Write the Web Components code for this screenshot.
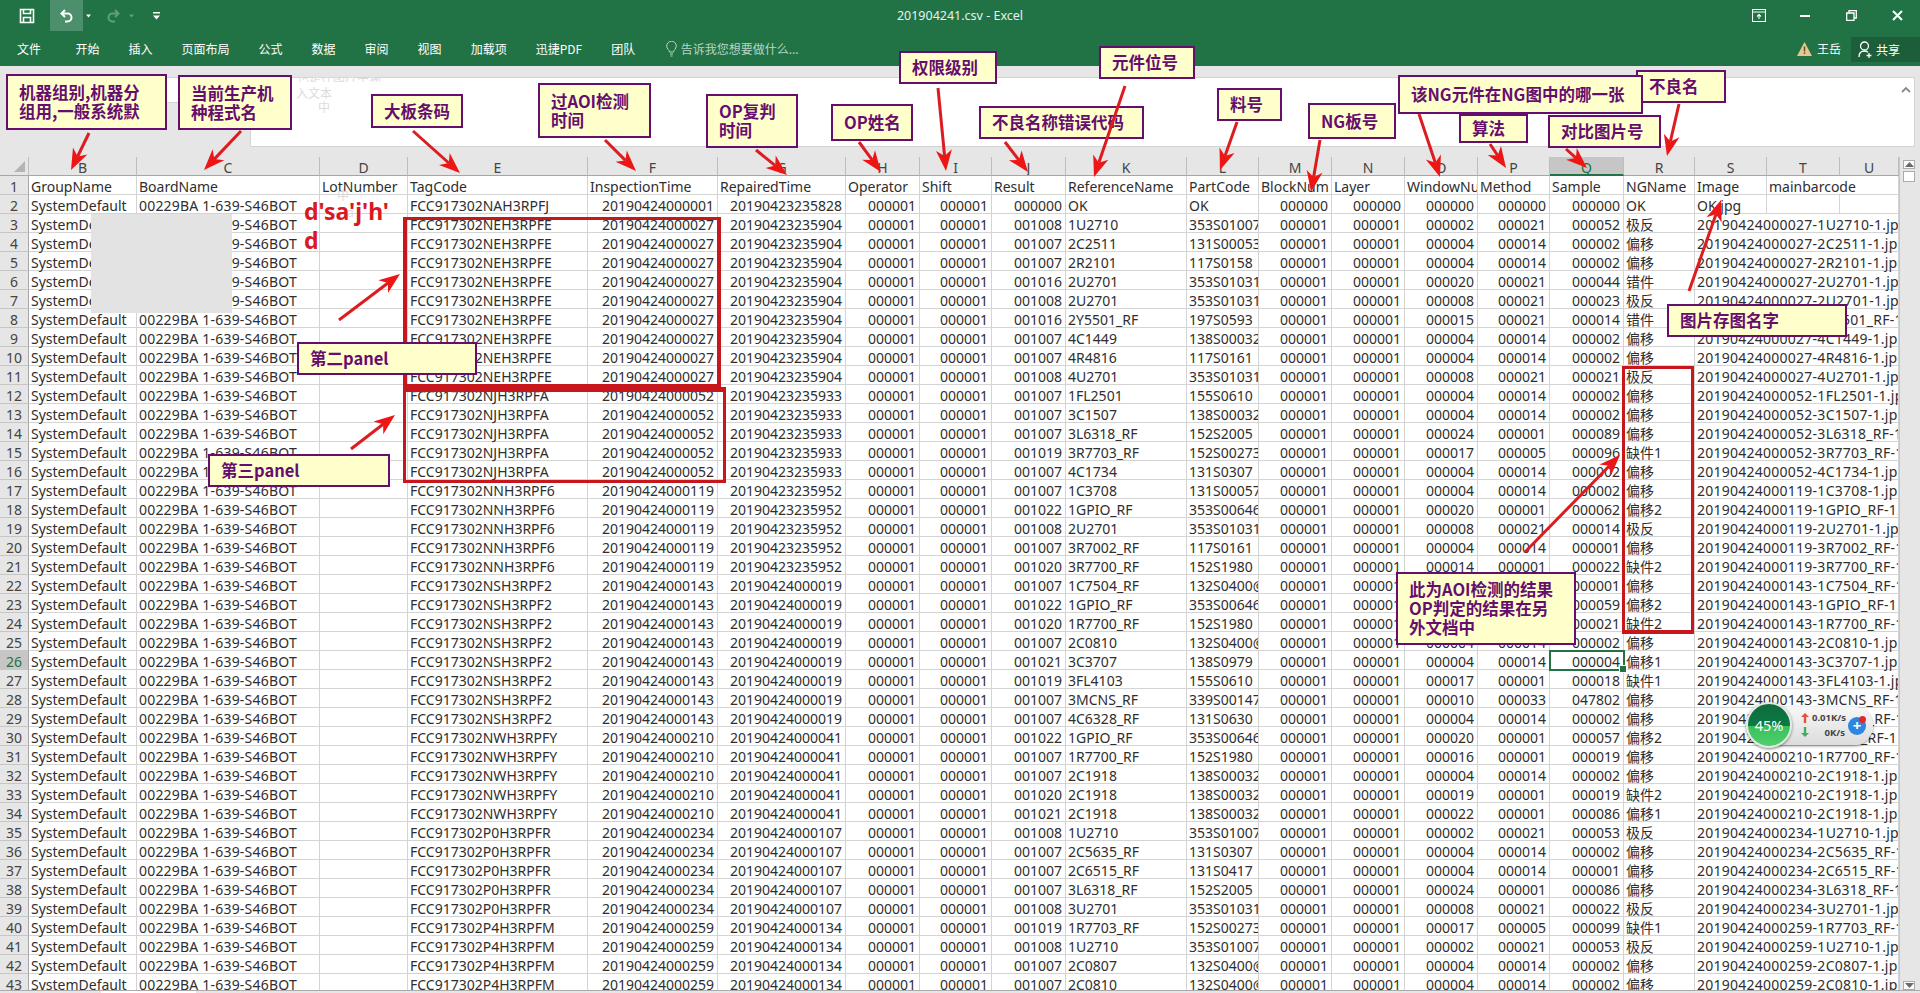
<!DOCTYPE html>
<html lang="zh-CN">
<head>
<meta charset="utf-8">
<title>201904241.csv - Excel</title>
<style>
  html, body { margin: 0; height: 100%; overflow: hidden; background: #e6e6e6; }
  body { display: flex; flex-direction: column; font-family: "Noto Sans", "Noto Sans CJK SC", sans-serif; }
</style>
</head>
<body>
<excel-titlebar></excel-titlebar>
<excel-tabs></excel-tabs>
<formula-bar></formula-bar>
<sheet-view></sheet-view>
<sheet-tabs></sheet-tabs>

<mark-box x="403" y="217" w="318" h="172" t="3" b="5" r="4" l="4"></mark-box>
<mark-box x="403" y="387" w="323" h="96" t="5" b="3" r="3" l="3"></mark-box>
<mark-box x="1622" y="366" w="72" h="268" t="3" b="4" r="3" l="3"></mark-box>
<ghost-text x="297" y="77" clip="5" text="也是在图片中输"></ghost-text>
<ghost-text x="296" y="86" text="入文本"></ghost-text>
<ghost-text x="318" y="100" text="中"></ghost-text>
<ghost-text x="337" y="188" text="中"></ghost-text>
<ghost-text x="347" y="205" text="a"></ghost-text>
<blur-patch></blur-patch>
<hand-note>d'sa'j'h'<br>d</hand-note>

<call-out x="6" y="74" w="161" h="56">机器组别,机器分<br>组用,一般系统默</call-out>
<call-out x="178" y="75" w="114" h="55">当前生产机<br>种程式名</call-out>
<call-out x="371" y="94" w="92" h="34">大板条码</call-out>
<call-out x="538" y="83" w="113" h="55">过AOI检测<br>时间</call-out>
<call-out x="706" y="94" w="92" h="54">OP复判<br>时间</call-out>
<call-out x="831" y="104" w="82" h="37">OP姓名</call-out>
<call-out x="899" y="51" w="98" h="33">权限级别</call-out>
<call-out x="979" y="106" w="165" h="33">不良名称错误代码</call-out>
<call-out x="1099" y="46" w="96" h="33">元件位号</call-out>
<call-out x="1217" y="88" w="65" h="33">料号</call-out>
<call-out x="1308" y="103" w="88" h="36">NG板号</call-out>
<call-out x="1636" y="70" w="90" h="33">不良名</call-out>
<call-out x="1459" y="114" w="69" h="29">算法</call-out>
<call-out x="1548" y="115" w="113" h="33">对比图片号</call-out>
<call-out x="1398" y="75" w="245" h="39">该NG元件在NG图中的哪一张</call-out>
<call-out x="297" y="342" w="180" h="33">第二panel</call-out>
<call-out x="208" y="454" w="182" h="33">第三panel</call-out>
<call-out x="1667" y="304" w="180" h="33">图片存图名字</call-out>
<call-out x="1396" y="572" w="180" h="73">此为AOI检测的结果<br>OP判定的结果在另<br>外文档中</call-out>

<arrow-layer></arrow-layer>
<net-widget></net-widget>

<script>
class ExcelTitlebar extends HTMLElement {
  constructor() {
    super();
    this.attachShadow({ mode: 'open' });
    this.shadowRoot.innerHTML = `
      <style>
        :host { display: grid; grid-template-columns: 1fr auto 1fr; height: 31px; background: #217346; color: #fff; font: 12.5px "Noto Sans", sans-serif; }
        .qat { display: flex; align-items: center; padding-left: 19px; }
        .undo { display: flex; align-items: center; justify-content: center; width: 33px; height: 31px; background: #4b8f6d; margin-left: 15px; }
        .title { align-self: center; color: #e8f1ec; }
        .win { display: flex; justify-content: flex-end; }
        .win span { display: flex; align-items: center; justify-content: center; width: 46px; }
        .caret { margin-left: 2px; }
        svg { display: block; }
      </style>
      <div class="qat">
        <svg width="16" height="16" viewBox="0 0 16 16" fill="none" stroke="#fff" stroke-width="1.6"><path d="M1.5 1.5h13v13h-13z"/><path d="M4.5 1.5v4h7v-4M4.5 14.5v-5h7v5"/></svg>
        <span class="undo"><svg width="16" height="16" viewBox="0 0 16 16" fill="none" stroke="#fff" stroke-width="2"><path d="M6 2L2.5 5.5 6 9"/><path d="M3 5.5h5.5a4 4 0 0 1 0 8H6"/></svg></span>
        <svg class="caret" width="7" height="6" viewBox="0 0 7 6"><path d="M1 1.5h5L3.5 4.5z" fill="#fff"/></svg>
        <svg style="margin-left:13px" width="16" height="16" viewBox="0 0 16 16" fill="none" stroke="#5f9f7f" stroke-width="2"><path d="M10 2l3.5 3.5L10 9"/><path d="M13 5.500H7.500a4 4 0 0 0 0 8H10"/></svg>
        <svg style="margin-left:7px" width="7" height="6" viewBox="0 0 7 6"><path d="M1 1.500h5L3.500 4.500z" fill="#5f9f7f"/></svg>
        <svg style="margin-left:17px" width="9" height="10" viewBox="0 0 9 10" fill="#fff"><path d="M1 1h7v1.400H1zM1 4.500h7L4.500 8.500z"/></svg>
      </div>
      <div class="title">201904241.csv - Excel</div>
      <div class="win">
        <span><svg width="14" height="13" viewBox="0 0 14 13" fill="none" stroke="#fff" stroke-width="1.100"><path d="M.5.500h13v12H.500zM.5 3h13"/><path d="M7 10V5.500M5 7.500l2-2 2 2"/></svg></span>
        <span><svg width="10" height="4" viewBox="0 0 10 4"><path d="M0 1h10v2H0z" fill="#fff"/></svg></span>
        <span><svg width="11" height="11" viewBox="0 0 11 11" fill="none" stroke="#fff" stroke-width="1.300"><path d="M.7 3h7.300v7.300H.700zM3 3V.7h7.300V8H8"/></svg></span>
        <span><svg width="11" height="11" viewBox="0 0 11 11" stroke="#fff" stroke-width="2"><path d="M1 1l9 9M10 1l-9 9"/></svg></span>
      </div>`;
  }
}

class ExcelTabs extends HTMLElement {
  constructor() {
    super();
    this.attachShadow({ mode: 'open' });
    const tabs = ['开始', '插入', '页面布局', '公式', '数据', '审阅', '视图', '加载项', '迅捷PDF', '团队'];
    this.shadowRoot.innerHTML = `
      <style>
        :host { display: flex; align-items: center; height: 35px; background: #217346; color: #fff; font: 12px "Noto Sans CJK SC", sans-serif; }
        .tab { padding: 0 14.500px; white-space: nowrap; }
        .file { padding: 0 20px 0 17px; }
        .tell { display: flex; align-items: center; gap: 4px; margin-left: 16px; color: #b8d5c5; }
        .user { display: flex; align-items: center; gap: 5px; margin-left: auto; margin-right: 10px; }
        .share { display: flex; align-items: center; gap: 3px; width: 69px; height: 25px; padding-left: 7px; box-sizing: border-box; background: #1c5d3a; margin-top: 2px; }
      </style>
      <span class="tab file">文件</span>
      ${tabs.map(t => `<span class="tab">${t}</span>`).join('')}
      <span class="tell">
        <svg width="11" height="16" viewBox="0 0 11 16" fill="none" stroke="#b8d5c5"><path d="M3.500 11c0-2-2.800-3-2.800-6a4.800 4.800 0 0 1 9.600 0c0 3-2.800 4-2.800 6z"/><path d="M4 13h3M4.500 15h2"/></svg>
        告诉我您想要做什么...
      </span>
      <span class="user">
        <svg width="15" height="14" viewBox="0 0 15 14"><path d="M7.500 0L15 14H0z" fill="#e7c690"/><path d="M6.800 4.500h1.400v5H6.800zM6.800 10.500h1.400V12H6.800z" fill="#5b4a2a"/></svg>
        王岳
      </span>
      <span class="share">
        <svg width="15" height="18" viewBox="0 0 15 18" fill="none" stroke="#fff" stroke-width="1.300"><circle cx="6.500" cy="5" r="4"/><path d="M1 16c0-4 2-6 5.500-6 1.500 0 2.500.5 3.500 1.200"/><path d="M11 12v5M8.500 14.500h5"/></svg>
        共享
      </span>`;
  }
}

class FormulaBar extends HTMLElement {
  constructor() {
    super();
    this.attachShadow({ mode: 'open' });
    this.shadowRoot.innerHTML = `
      <style>
        :host { display: flex; align-items: flex-start; height: 91px; box-sizing: border-box; padding: 11px 5px 10px 6px; background: #e6e6e6; }
        .name { width: 244px; height: 26px; box-sizing: border-box; background: #fff; border: 1px solid #d4d4d4; border-right: 0; }
        .input { position: relative; flex: 1; height: 70px; box-sizing: border-box; background: #fff; border: 1px solid #d4d4d4; }
        svg { position: absolute; right: 3px; top: 8px; }
      </style>
      <div class="name"></div>
      <div class="input"><svg width="10" height="7" viewBox="0 0 10 7" fill="none" stroke="#8a8a8a" stroke-width="1.800"><path d="M1 6l4-4 4 4"/></svg></div>`;
  }
}

const COLS = [108, 183, 88, 180, 130, 128, 74, 72, 74, 121, 72, 73, 73, 73, 72, 74, 71, 72, 73, 59];
const LETTERS = 'BCDEFGHIJKLMNOPQRSTU'.split('');
const HEAD = ['GroupName', 'BoardName', 'LotNumber', 'TagCode', 'InspectionTime', 'RepairedTime', 'Operator', 'Shift', 'Result', 'ReferenceName', 'PartCode', 'BlockNum', 'Layer', 'WindowNumber', 'Method', 'Sample', 'NGName', 'Image'];

// tag, inspection, repaired, rows: result ref part window method sample ngname
const PANELS = [
  ['NEH3RPFE', '000027', '20190423235904', [
    '001008 1U2710 353S01007 000002 000021 000052 极反',
    '001007 2C2511 131S00053 000004 000014 000002 偏移',
    '001007 2R2101 117S0158 000004 000014 000002 偏移',
    '001016 2U2701 353S01031 000020 000021 000044 错件',
    '001008 2U2701 353S01031 000008 000021 000023 极反',
    '001016 2Y5501_RF 197S0593 000015 000021 000014 错件',
    '001007 4C1449 138S00032 000004 000014 000002 偏移',
    '001007 4R4816 117S0161 000004 000014 000002 偏移',
    '001008 4U2701 353S01031 000008 000021 000021 极反']],
  ['NJH3RPFA', '000052', '20190423235933', [
    '001007 1FL2501 155S0610 000004 000014 000002 偏移',
    '001007 3C1507 138S00032 000004 000014 000002 偏移',
    '001007 3L6318_RF 152S2005 000024 000001 000089 偏移',
    '001019 3R7703_RF 152S00273 000017 000005 000096 缺件1',
    '001007 4C1734 131S0307 000004 000014 000002 偏移']],
  ['NNH3RPF6', '000119', '20190423235952', [
    '001007 1C3708 131S00057 000004 000014 000002 偏移',
    '001022 1GPIO_RF 353S00646 000020 000001 000062 偏移2',
    '001008 2U2701 353S01031 000008 000021 000014 极反',
    '001007 3R7002_RF 117S0161 000004 000014 000001 偏移',
    '001020 3R7700_RF 152S1980 000014 000001 000022 缺件2']],
  ['NSH3RPF2', '000143', '20190424000019', [
    '001007 1C7504_RF 132S0400@ 000004 000014 000001 偏移',
    '001022 1GPIO_RF 353S00646 000020 000001 000059 偏移2',
    '001020 1R7700_RF 152S1980 000016 000001 000021 缺件2',
    '001007 2C0810 132S0400@ 000004 000014 000002 偏移',
    '001021 3C3707 138S0979 000004 000014 000004 偏移1',
    '001019 3FL4103 155S0610 000017 000001 000018 缺件1',
    '001007 3MCNS_RF 339S00147 000010 000033 047802 偏移',
    '001007 4C6328_RF 131S0630 000004 000014 000002 偏移']],
  ['NWH3RPFY', '000210', '20190424000041', [
    '001022 1GPIO_RF 353S00646 000020 000001 000057 偏移2',
    '001007 1R7700_RF 152S1980 000016 000001 000019 偏移',
    '001007 2C1918 138S00032 000004 000014 000002 偏移',
    '001020 2C1918 138S00032 000019 000001 000019 缺件2',
    '001021 2C1918 138S00032 000022 000001 000086 偏移1']],
  ['P0H3RPFR', '000234', '20190424000107', [
    '001008 1U2710 353S01007 000002 000021 000053 极反',
    '001007 2C5635_RF 131S0307 000004 000014 000002 偏移',
    '001007 2C6515_RF 131S0417 000004 000014 000001 偏移',
    '001007 3L6318_RF 152S2005 000024 000001 000086 偏移',
    '001008 3U2701 353S01031 000008 000021 000022 极反']],
  ['P4H3RPFM', '000259', '20190424000134', [
    '001019 1R7703_RF 152S00273 000017 000005 000099 缺件1',
    '001008 1U2710 353S01007 000002 000021 000053 极反',
    '001007 2C0807 132S0400@ 000004 000014 000002 偏移',
    '001007 2C0810 132S0400@ 000004 000014 000002 偏移']],
];

class SheetView extends HTMLElement {
  constructor() {
    super();
    this.attachShadow({ mode: 'open' });
    this.shadowRoot.innerHTML = `
      <style>
        :host { display: flex; flex: 1; min-height: 0; overflow: hidden; background: #fff; font: 14px "Noto Sans", "Noto Sans CJK SC", sans-serif; color: #2e2e2e; }
        .grid { display: grid; grid-template-columns: 29px ${COLS.map(c => c + 'px').join(' ')}; grid-auto-rows: 19px; }
        .grid > div { box-sizing: border-box; border-right: 1px solid #d4d4d4; border-bottom: 1px solid #d4d4d4; line-height: 22px; padding: 0 2px 0 2px; white-space: nowrap; overflow-x: clip; overflow-y: visible; }
        .grid > .num { text-align: right; padding-right: 3px; }
        .grid > .ch { background: #e6e6e6; text-align: center; color: #444; border-right-color: #bdbdbd; border-bottom-color: #a6a6a6; padding: 0; overflow: hidden; }
        .grid > .rh { background: #e6e6e6; text-align: center; color: #444; border-right-color: #a6a6a6; border-bottom-color: #c6c6c6; padding: 0; overflow: hidden; }
        .grid > .corner { background: #e6e6e6; border-bottom-color: #a6a6a6; border-right-color: #bdbdbd; position: relative; }
        .corner::after { content: ''; position: absolute; right: 3px; bottom: 3px; width: 11px; height: 11px; background: #b4b4b4; clip-path: polygon(100% 0, 100% 100%, 0 100%); }
        .grid > .sel { background: #c6c6c6; color: #217346; }
        .grid > .ch.sel { border-bottom: 2px solid #217346; }
        .grid > .active { position: relative; overflow: visible; outline: 2px solid #217346; outline-offset: -1px; z-index: 1; }
        .active::after { content: ''; position: absolute; right: -4px; bottom: -4px; width: 6px; height: 6px; background: #217346; border: 1px solid #fff; }
        .grid > .s { grid-column: span 3; letter-spacing: .25px; }
        .grid > .board { letter-spacing: .2px; }
        .grid > .wide { grid-column: span 2; }
        .bar { display: flex; flex-direction: column; width: 21px; box-sizing: border-box; padding: 3px 5px 0 3px; background: #e6e6e6; border-left: 1px solid #c6c6c6; }
        .btn { height: 15px; background: #fafafa; border: 1px solid #ababab; box-sizing: border-box; display: flex; align-items: center; justify-content: center; }
        .thumb { height: 16px; margin-top: 2px; background: #fff; border: 1px solid #ababab; box-sizing: border-box; }
        .down { margin-top: 799px; }
      </style>
      <div class="grid">${this.buildCells()}</div>
      <div class="bar">
        <div class="btn"><svg width="9" height="5" viewBox="0 0 9 5"><path d="M4.500 0L9 5H0z" fill="#6a6a6a"/></svg></div>
        <div class="thumb"></div>
        <div class="btn down"><svg width="9" height="5" viewBox="0 0 9 5"><path d="M0 0h9L4.500 5z" fill="#6a6a6a"/></svg></div>
      </div>`;
  }

  buildCells() {
    let html = '<div class="corner"></div>';
    LETTERS.forEach(l => { html += `<div class="ch${l === 'Q' ? ' sel' : ''}">${l}</div>`; });
    html += '<div class="rh">1</div>' + HEAD.map(h => `<div>${h}</div>`).join('') + '<div class="wide">mainbarcode</div>';

    const left = (t) => `<div>${t}</div>`;
    const right = (t) => `<div class="num">${t}</div>`;
    const common = (n, tag, insp, rep) =>
      `<div class="rh${n === 26 ? ' sel' : ''}">${n}</div>` + left('SystemDefault') + '<div class="board">00229BA 1-639-S46BOT</div>' + left('') +
      left('FCC917302' + tag) + right('20190424' + insp) + right(rep) + right('000001') + right('000001');

    html += common(2, 'NAH3RPFJ', '000001', '20190423235828') + right('000000') + left('OK') + left('OK') +
      right('000000') + right('000000') + right('000000') + right('000000') + right('000000') + left('OK') + left('OK.jpg') + left('') + left('');

    let n = 3;
    PANELS.forEach(([tag, insp, rep, rows]) => {
      rows.forEach(row => {
        const [result, ref, part, win, method, sample, ng] = row.split(' ');
        html += common(n, tag, insp, rep) + right(result) + left(ref) + left(part) +
          right('000001') + right('000001') + right(win) + right(method) +
          `<div class="num${n === 26 ? ' active' : ''}">${sample}</div>` + left(ng) +
          `<div class="s">20190424${insp}-${ref}-1.jpg</div>`;
        n++;
      });
    });
    return html;
  }
}

class SheetTabs extends HTMLElement {
  constructor() {
    super();
    this.attachShadow({ mode: 'open' });
    this.shadowRoot.innerHTML = `
      <style>
        :host { display: block; height: 3px; background: #e6e6e6; border-top: 1px solid #ababab; box-sizing: border-box; padding-left: 101px; }
        div { width: 95px; height: 2px; background: #fff; }
      </style>
      <div></div>`;
  }
}

class OverlayBox extends HTMLElement {
  place() {
    const a = (k) => this.getAttribute(k);
    this.style.left = a('x') + 'px';
    this.style.top = a('y') + 'px';
    if (a('w')) this.style.width = a('w') + 'px';
    if (a('h')) this.style.height = a('h') + 'px';
  }
  connectedCallback() { this.place(); }
}

class CallOut extends OverlayBox {
  constructor() {
    super();
    this.attachShadow({ mode: 'open' });
    this.shadowRoot.innerHTML = `
      <style>
        :host { position: absolute; display: flex; align-items: center; box-sizing: border-box; padding-left: 11px; background: #ffffcc; border: 2.500px solid #660e6e; color: #660e6e; font: 700 16.500px/19px "Noto Sans CJK SC", sans-serif; white-space: nowrap; }
      </style>
      <div><slot></slot></div>`;
  }
}

class MarkBox extends OverlayBox {
  constructor() {
    super();
    this.attachShadow({ mode: 'open' });
    this.shadowRoot.innerHTML = `<style>:host { position: absolute; box-sizing: border-box; border: 0 solid #c8161d; }</style>`;
  }
  connectedCallback() {
    this.place();
    ['top', 'bottom', 'left', 'right'].forEach(side => {
      this.style['border' + side[0].toUpperCase() + side.slice(1) + 'Width'] = this.getAttribute(side[0]) + 'px';
    });
  }
}

class GhostText extends OverlayBox {
  constructor() {
    super();
    this.attachShadow({ mode: 'open' });
  }
  connectedCallback() {
    this.place();
    const clip = this.getAttribute('clip');
    this.shadowRoot.innerHTML = `
      <style>
        :host { position: absolute; font: 12px/14px "Noto Sans CJK SC", sans-serif; color: #dcdcdc; white-space: nowrap; ${clip ? `height: ${clip}px; overflow: hidden;` : ''} }
      </style>
      <div style="${clip ? 'margin-top:-7px' : ''}">${this.getAttribute('text')}</div>`;
  }
}

class BlurPatch extends HTMLElement {
  constructor() {
    super();
    this.attachShadow({ mode: 'open' });
    this.shadowRoot.innerHTML = `<style>:host { position: absolute; left: 91px; top: 214px; width: 141px; height: 99px; background: #e3e3e3; }</style>`;
  }
}

class HandNote extends HTMLElement {
  constructor() {
    super();
    this.attachShadow({ mode: 'open' });
    this.shadowRoot.innerHTML = `
      <style>:host { position: absolute; left: 304px; top: 197px; font: 700 23px/29px "Noto Sans", sans-serif; color: #d9191f; white-space: nowrap; }</style>
      <slot></slot>`;
  }
}

class ArrowLayer extends HTMLElement {
  constructor() {
    super();
    this.attachShadow({ mode: 'open' });
    const arrows = [
      [89, 133, 71, 170], [241, 131, 204, 170], [413, 131, 460, 173], [605, 140, 636, 171],
      [756, 150, 787, 175], [859, 142, 881, 172], [938, 88, 946, 171], [1005, 142, 1028, 172],
      [1125, 86, 1094, 177], [1237, 122, 1220, 170], [1320, 140, 1311, 192], [1419, 114, 1440, 177],
      [1490, 144, 1506, 168], [1566, 149, 1587, 168], [1679, 104, 1667, 156], [1689, 291, 1721, 200],
      [339, 320, 400, 274], [351, 449, 395, 415], [1525, 552, 1620, 455],
    ];
    this.shadowRoot.innerHTML = `
      <style>:host { position: absolute; left: 0; top: 0; width: 1920px; height: 993px; pointer-events: none; } svg { display: block; }</style>
      <svg width="1920" height="993" viewBox="0 0 1920 993">${arrows.map(a => this.arrow(...a)).join('')}</svg>`;
  }

  arrow(x1, y1, x2, y2) {
    const len = Math.hypot(x2 - x1, y2 - y1);
    const ux = (x2 - x1) / len, uy = (y2 - y1) / len;
    const px = -uy, py = ux;
    const head = 21, half = 8, notch = 15;
    const pt = (back, side) => `${(x2 - ux * back + px * side).toFixed(1)},${(y2 - uy * back + py * side).toFixed(1)}`;
    return `<line x1="${x1}" y1="${y1}" x2="${(x2 - ux * notch).toFixed(1)}" y2="${(y2 - uy * notch).toFixed(1)}" stroke="#dc1c20" stroke-width="3"/>` +
      `<polygon points="${pt(0, 0)} ${pt(head, half)} ${pt(notch, 0)} ${pt(head, -half)}" fill="#ee1515"/>`;
  }
}

class NetWidget extends HTMLElement {
  constructor() {
    super();
    this.attachShadow({ mode: 'open' });
    this.shadowRoot.innerHTML = `
      <style>
        :host { position: absolute; left: 1746px; top: 701px; display: flex; align-items: center; width: 127px; height: 48px; font: 700 9.500px "Noto Sans", sans-serif; color: #444; }
        .pill { position: absolute; left: 8px; right: 0; top: 6px; bottom: 4px; border-radius: 20px; background: linear-gradient(#f7f7f7, #dcdcdc); box-shadow: 0 1px 3px rgba(0,0,0,.45); }
        .ball { position: relative; width: 46px; height: 46px; box-sizing: border-box; border-radius: 50%; border: 2px solid #dfe9df; box-shadow: 0 1px 3px rgba(0,0,0,.5); background: linear-gradient(#0f6b3c 0, #0c7a45 52%, #38c05c 52%, #4fd06c 100%); color: #fff; font: 14.500px/42px "Noto Sans", sans-serif; text-align: center; }
        .arrows, .speeds { position: relative; display: flex; flex-direction: column; gap: 3px; }
        .arrows { margin-left: 9px; gap: 4px; }
        .speeds { width: 33px; margin-left: 3px; text-align: right; gap: 4px; line-height: 11px; }
        .plus { position: absolute; left: 102px; top: 16px; width: 18px; height: 18px; border-radius: 50%; background: #2f86e0; color: #fff; font: 700 15px/17px "Noto Sans", sans-serif; text-align: center; }
        .dot { position: absolute; left: 113px; top: 15px; width: 7px; height: 7px; border-radius: 50%; background: #e02a2a; }
        svg { display: block; }
      </style>
      <div class="pill"></div>
      <div class="ball">45%</div>
      <div class="arrows">
        <svg width="8" height="10" viewBox="0 0 8 10"><path d="M4 0l4 4H5.200v6H2.800V4H0z" fill="#e0533c"/></svg>
        <svg width="8" height="10" viewBox="0 0 8 10"><path d="M4 10L0 6h2.800V0h2.400v6H8z" fill="#3caf5c"/></svg>
      </div>
      <div class="speeds"><span>0.01K/s</span><span>0K/s</span></div>
      <div class="plus">+</div>
      <div class="dot"></div>`;
  }
}

customElements.define('excel-titlebar', ExcelTitlebar);
customElements.define('excel-tabs', ExcelTabs);
customElements.define('formula-bar', FormulaBar);
customElements.define('sheet-view', SheetView);
customElements.define('sheet-tabs', SheetTabs);
customElements.define('call-out', CallOut);
customElements.define('mark-box', MarkBox);
customElements.define('ghost-text', GhostText);
customElements.define('blur-patch', BlurPatch);
customElements.define('hand-note', HandNote);
customElements.define('arrow-layer', ArrowLayer);
customElements.define('net-widget', NetWidget);
</script>
</body>
</html>
